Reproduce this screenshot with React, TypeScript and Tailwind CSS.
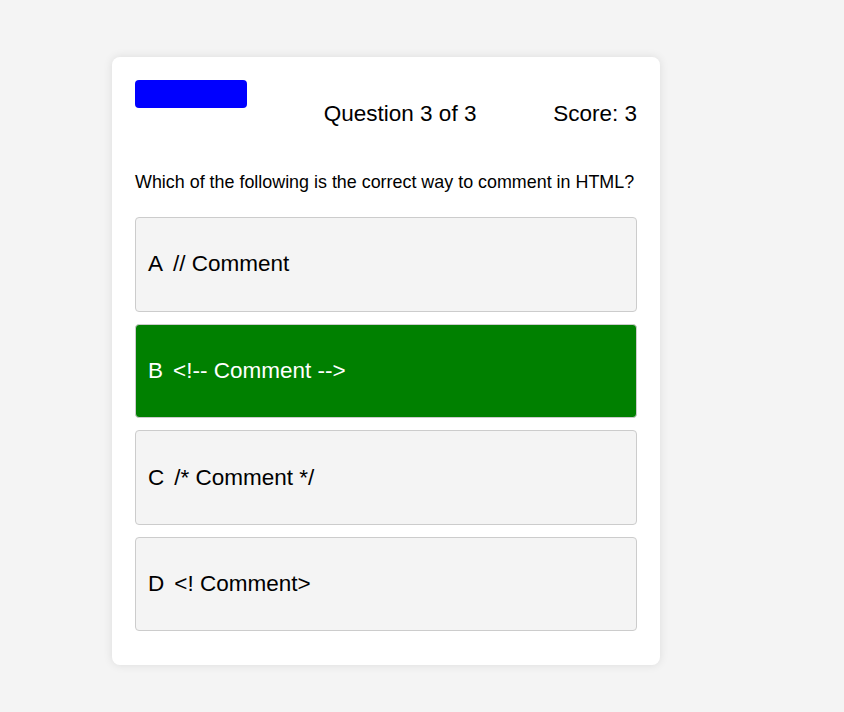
import React from 'react';

const options = [
  { key: 'A', text: '// Comment', correct: false },
  { key: 'B', text: '<!-- Comment -->', correct: true },
  { key: 'C', text: '/* Comment */', correct: false },
  { key: 'D', text: '<! Comment>', correct: false },
];

const App = () => {
  return (
    <div className="min-h-screen w-full bg-[#f4f4f4] pt-[57px] pl-[112px] font-['Liberation_Sans',Arial,sans-serif] text-black">
      <div className="w-[548px] rounded-[8px] bg-white px-[23px] pt-[23px] pb-[34px] shadow-[0_0_10px_rgba(0,0,0,0.1)]">
        <div className="flex items-start justify-between">
          <button className="h-[28px] w-[112px] rounded-[4px] bg-[#0000ff]" />
          <div className="mt-[21px] text-[22.5px] leading-[26px]">Question 3 of 3</div>
          <div className="mt-[21px] text-[22.5px] leading-[26px]">Score: 3</div>
        </div>
        <p className="mt-[45px] whitespace-nowrap text-[17.9px] leading-[21px]">
          Which of the following is the correct way to comment in HTML?
        </p>
        <div className="mt-[24px] flex flex-col gap-[12px]">
          {options.map((o) => (
            <div
              key={o.key}
              className={
                o.correct
                  ? 'flex h-[94.6px] items-center rounded-[4px] border border-[#cccccc] bg-[#008000] px-[12px] text-[22.5px] text-white'
                  : 'flex h-[94.6px] items-center rounded-[4px] border border-[#cccccc] bg-[#f4f4f4] px-[12px] text-[22.5px] text-black'
              }
            >
              <span className="mr-[10px]">{o.key}</span>
              <span>{o.text}</span>
            </div>
          ))}
        </div>
      </div>
    </div>
  );
};

export default App;
